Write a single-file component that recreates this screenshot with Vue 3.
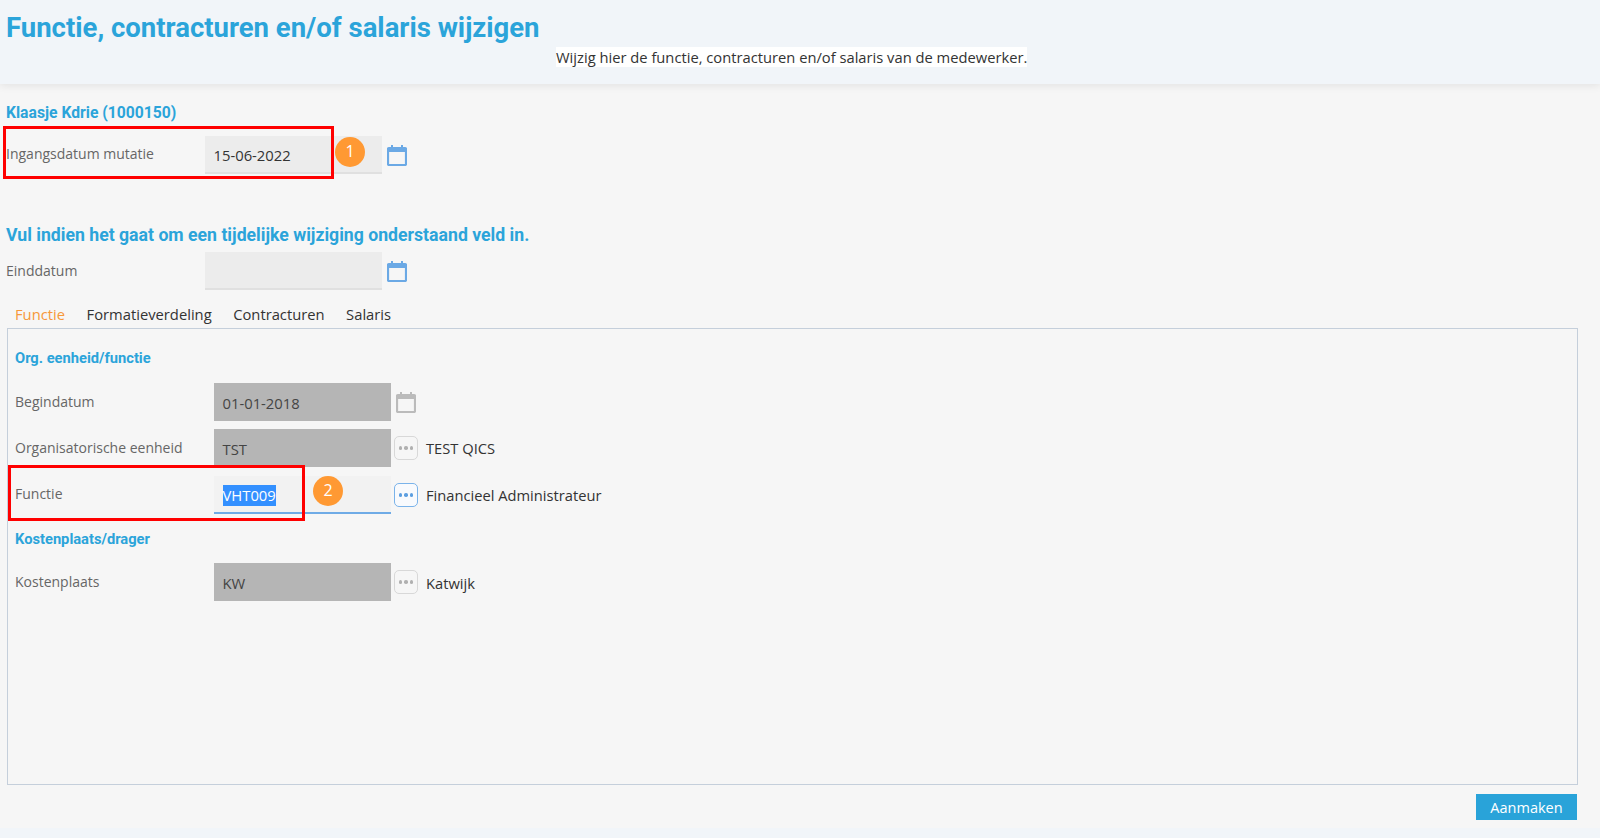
<script setup>
</script>

<template>
  <div class="page">
    <header class="top">
      <h1>Functie, contracturen en/of salaris wijzigen</h1>
      <p class="sub"><span>Wijzig hier de functie, contracturen en/of salaris van de medewerker.</span></p>
    </header>

    <main class="main">
      <h2 class="name">Klaasje Kdrie (1000150)</h2>
      <div class="row first">
        <label>Ingangsdatum mutatie</label>
        <div class="field">15-06-2022</div>
        <svg class="cal" viewBox="0 0 20 22"><path d="M2 4h16a1 1 0 0 1 1 1v15a1 1 0 0 1-1 1H2a1 1 0 0 1-1-1V5a1 1 0 0 1 1-1z" fill="none" stroke="currentColor" stroke-width="2.2"/><path d="M1 4h18v4H1zM4 1h2v4H4zM14 1h2v4h-2z" fill="currentColor"/></svg>
      </div>

      <h2 class="temp">Vul indien het gaat om een tijdelijke wijziging onderstaand veld in.</h2>
      <div class="row">
        <label>Einddatum</label>
        <div class="field"></div>
        <svg class="cal" viewBox="0 0 20 22"><path d="M2 4h16a1 1 0 0 1 1 1v15a1 1 0 0 1-1 1H2a1 1 0 0 1-1-1V5a1 1 0 0 1 1-1z" fill="none" stroke="currentColor" stroke-width="2.2"/><path d="M1 4h18v4H1zM4 1h2v4H4zM14 1h2v4h-2z" fill="currentColor"/></svg>
      </div>

      <nav class="tabs">
        <span class="active">Functie</span>
        <span>Formatieverdeling</span>
        <span>Contracturen</span>
        <span>Salaris</span>
      </nav>

      <section class="panel">
        <h3 class="org">Org. eenheid/functie</h3>
        <div class="row p">
          <label>Begindatum</label>
          <div class="field off">01-01-2018</div>
          <svg class="cal grey" viewBox="0 0 20 22"><path d="M2 4h16a1 1 0 0 1 1 1v15a1 1 0 0 1-1 1H2a1 1 0 0 1-1-1V5a1 1 0 0 1 1-1z" fill="none" stroke="currentColor" stroke-width="2.2"/><path d="M1 4h18v4H1zM4 1h2v4H4zM14 1h2v4h-2z" fill="currentColor"/></svg>
        </div>
        <div class="row p">
          <label>Organisatorische eenheid</label>
          <div class="field off">TST</div>
          <button class="more grey"><i></i><i></i><i></i></button>
          <span class="val up">TEST QICS</span>
        </div>
        <div class="row p third">
          <label>Functie</label>
          <div class="field focus"><span class="sel">VHT009</span></div>
          <button class="more"><i></i><i></i><i></i></button>
          <span class="val up">Financieel Administrateur</span>
        </div>
        <h3 class="cost">Kostenplaats/drager</h3>
        <div class="row p">
          <label>Kostenplaats</label>
          <div class="field off">KW</div>
          <button class="more grey"><i></i><i></i><i></i></button>
          <span class="val">Katwijk</span>
        </div>
      </section>

      <div class="actions"><button class="primary">Aanmaken</button></div>
    </main>
    <div class="foot"></div>

    <div class="mark m1"></div>
    <div class="badge b1">1</div>
    <div class="mark m2"></div>
    <div class="badge b2">2</div>
  </div>
</template>

<style>
html, body { margin: 0; background: #f6f6f6; }
</style>

<style scoped>
.page { position: relative; height: 838px; overflow: hidden; background: #f6f6f6; font-family: "Open Sans", sans-serif; font-size: 14px; color: #444; }
.top { height: 84px; box-sizing: border-box; background: #f1f5f9; box-shadow: 0 2px 8px rgba(0,0,0,.08); padding: 12px 6px 0; }
h1, h2, h3, p { margin: 0; }
h1 { font: 700 27.5px/32px Roboto, sans-serif; color: #2ba4da; }
.sub { margin: 2px 0 0 550px; font-size: 14.72px; line-height: 22px; color: #333; }
.sub span { background: #fff; display: inline-block; line-height: 20px; }
.main { padding: 0 22px 0 6px; }
.name { font: 700 15.7px/20px Roboto, sans-serif; color: #2ba4da; margin-top: 19px; }
.row { display: flex; align-items: stretch; height: 38px; }
.row.first { margin-top: 13px; }
.row label { width: 199px; flex: none; line-height: 37px; color: #666; }
.row.first label, .row.third label { line-height: 35px; }
.field { width: 177px; flex: none; box-sizing: border-box; background: #ececec; border-bottom: 2px solid #e0e0e0; padding: 1px 9px 0 8.5px; font-size: 14.8px; line-height: 38px; color: #333; }
.row.first .field, .field.focus { padding-top: 0; }
.field.off { background: #b5b5b5; border-bottom: 0; color: #444; }
.field.focus { background: #f2f2f2; border-bottom: 2px solid #6fabe6; }
.sel { background: #3390ff; color: #fff; display: inline-block; line-height: 21px; }
.cal { width: 20px; height: 22px; margin: 8px 0 0 5px; color: #6ba9e5; flex: none; }
.cal.grey { color: #bbb; }
.temp { font: 700 17.67px/22px Roboto, sans-serif; color: #2ba4da; margin-top: 50px; margin-bottom: 6px; }
.tabs { display: flex; gap: 21.5px; padding-left: 9px; margin-top: 13px; line-height: 22px; font-size: 14.75px; color: #333; height: 25px; }
.tabs .active { color: #f7983a; }
.panel { box-sizing: border-box; height: 457px; margin-left: 1px; border: 1px solid #c5cfdb; padding: 0 7px; }
.org { font: 700 14.7px/18px Roboto, sans-serif; color: #2ba4da; margin: 20px 0 16px; }
.panel .row { margin-bottom: 8px; }
.panel .row.third { margin-top: 9px; }
.cost { font: 700 14.7px/18px Roboto, sans-serif; color: #2ba4da; margin: 16px 0 15px; }
.more { width: 24px; height: 24px; box-sizing: border-box; margin: 7px 0 0 3px; padding: 0; flex: none; border: 1.5px solid #7ab3ea; border-radius: 5px; background: #f8fafd; display: flex; align-items: center; justify-content: center; gap: 2px; }
.more i { width: 3.5px; height: 3.5px; border-radius: 50%; background: #5b9ee0; }
.more.grey { border-color: #d8d8d8; background: #f6f6f6; }
.more.grey i { background: #b0b0b0; }
.val { margin-left: 8px; padding-top: 1px; font-size: 14.7px; line-height: 38px; color: #333; }
.val.up { padding-top: 0; }
.actions { display: flex; justify-content: flex-end; margin-top: 9px; margin-right: 1px; }
.primary { width: 101px; height: 26px; border: 0; background: #29a3d9; color: #fff; font: 14.5px "Open Sans", sans-serif; padding: 0; }
.foot { position: absolute; left: 0; right: 0; bottom: 0; height: 10px; background: #f1f5f9; }
.mark { position: absolute; box-sizing: border-box; border: 3px solid #f00; }
.m1 { left: 3px; top: 126px; width: 331px; height: 53px; }
.m2 { left: 8px; top: 465px; width: 297px; height: 56px; }
.badge { position: absolute; width: 30px; height: 30px; border-radius: 50%; background: #ff9933; color: #fff; font-size: 16px; line-height: 28px; text-align: center; }
.b1 { left: 335px; top: 137px; }
.b2 { left: 313px; top: 476px; }
</style>
